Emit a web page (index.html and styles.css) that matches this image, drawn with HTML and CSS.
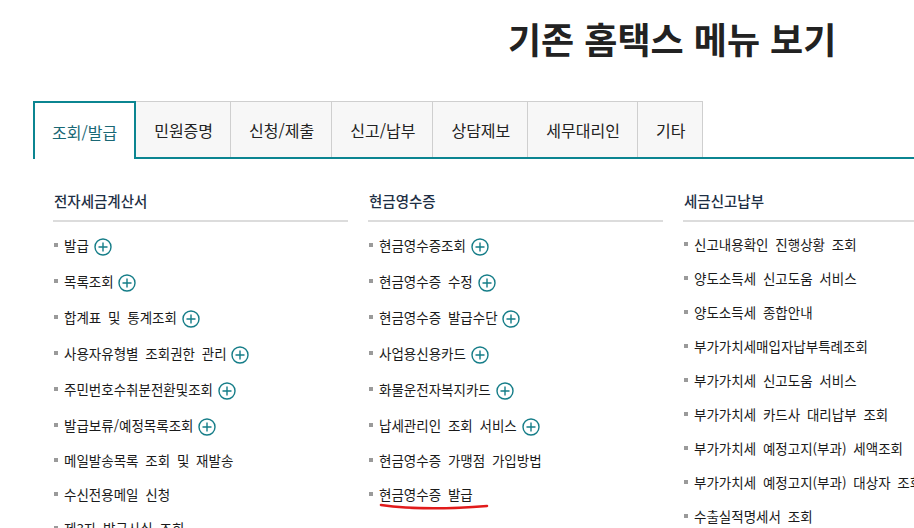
FILE: index.html
```html
<!DOCTYPE html>
<html lang="ko">

<head>
  <meta charset="UTF-8">
  <title>기존 홈택스 메뉴 보기</title>
  <link rel="stylesheet" href="styles.css">
</head>

<body>
  <div class="page">
    <!-- 제목 -->
    <h1 class="title">기존 홈택스 메뉴 보기</h1>

    <!-- 탭 -->
    <ul class="tabs">
      <li class="tab on">조회/발급</li>
      <li class="tab">민원증명</li>
      <li class="tab">신청/제출</li>
      <li class="tab">신고/납부</li>
      <li class="tab">상담제보</li>
      <li class="tab">세무대리인</li>
      <li class="tab">기타</li>
    </ul>

    <!-- 메뉴 목록 -->
    <div class="menu">
      <div class="col">
        <h2 class="col-title">전자세금계산서</h2>
        <ul class="items">
          <li class="item more">발급 <span class="plus"><svg viewBox="0 0 18 18"><circle cx="9" cy="9" r="8"/><path d="M9 4.5v9M4.5 9h9"/></svg></span></li>
          <li class="item more">목록조회 <span class="plus"><svg viewBox="0 0 18 18"><circle cx="9" cy="9" r="8"/><path d="M9 4.5v9M4.5 9h9"/></svg></span></li>
          <li class="item more">합계표 및 통계조회 <span class="plus"><svg viewBox="0 0 18 18"><circle cx="9" cy="9" r="8"/><path d="M9 4.5v9M4.5 9h9"/></svg></span></li>
          <li class="item more">사용자유형별 조회권한 관리 <span class="plus"><svg viewBox="0 0 18 18"><circle cx="9" cy="9" r="8"/><path d="M9 4.5v9M4.5 9h9"/></svg></span></li>
          <li class="item more">주민번호수취분전환및조회 <span class="plus"><svg viewBox="0 0 18 18"><circle cx="9" cy="9" r="8"/><path d="M9 4.5v9M4.5 9h9"/></svg></span></li>
          <li class="item more">발급보류/예정목록조회 <span class="plus"><svg viewBox="0 0 18 18"><circle cx="9" cy="9" r="8"/><path d="M9 4.5v9M4.5 9h9"/></svg></span></li>
          <li class="item">메일발송목록 조회 및 재발송</li>
          <li class="item">수신전용메일 신청</li>
          <li class="item">제3자 발급사실 조회</li>
        </ul>
      </div>

      <div class="col">
        <h2 class="col-title">현금영수증</h2>
        <ul class="items">
          <li class="item more">현금영수증조회 <span class="plus"><svg viewBox="0 0 18 18"><circle cx="9" cy="9" r="8"/><path d="M9 4.5v9M4.5 9h9"/></svg></span></li>
          <li class="item more">현금영수증 수정 <span class="plus"><svg viewBox="0 0 18 18"><circle cx="9" cy="9" r="8"/><path d="M9 4.5v9M4.5 9h9"/></svg></span></li>
          <li class="item more">현금영수증 발급수단 <span class="plus"><svg viewBox="0 0 18 18"><circle cx="9" cy="9" r="8"/><path d="M9 4.5v9M4.5 9h9"/></svg></span></li>
          <li class="item more">사업용신용카드 <span class="plus"><svg viewBox="0 0 18 18"><circle cx="9" cy="9" r="8"/><path d="M9 4.5v9M4.5 9h9"/></svg></span></li>
          <li class="item more">화물운전자복지카드 <span class="plus"><svg viewBox="0 0 18 18"><circle cx="9" cy="9" r="8"/><path d="M9 4.5v9M4.5 9h9"/></svg></span></li>
          <li class="item more">납세관리인 조회 서비스 <span class="plus"><svg viewBox="0 0 18 18"><circle cx="9" cy="9" r="8"/><path d="M9 4.5v9M4.5 9h9"/></svg></span></li>
          <li class="item">현금영수증 가맹점 가입방법</li>
          <li class="item marked">현금영수증 발급
            <!-- 빨간 밑줄 표시 -->
            <svg class="mark" viewBox="0 0 112 9"><path d="M2 3 C 30 7, 70 7, 108 4"/></svg>
          </li>
        </ul>
      </div>

      <div class="col">
        <h2 class="col-title">세금신고납부</h2>
        <ul class="items">
          <li class="item">신고내용확인 진행상황 조회</li>
          <li class="item">양도소득세 신고도움 서비스</li>
          <li class="item">양도소득세 종합안내</li>
          <li class="item">부가가치세매입자납부특례조회</li>
          <li class="item">부가가치세 신고도움 서비스</li>
          <li class="item">부가가치세 카드사 대리납부 조회</li>
          <li class="item">부가가치세 예정고지(부과) 세액조회</li>
          <li class="item">부가가치세 예정고지(부과) 대상자 조회</li>
          <li class="item">수출실적명세서 조회</li>
        </ul>
      </div>
    </div>
  </div>
</body>

</html>
```

FILE: styles.css
```css
* {
  margin: 0;
  padding: 0;
  box-sizing: border-box;
}

html,
body {
  overflow: hidden;
}

body {
  background: #fff;
  color: #222;
  font-family: "Noto Sans CJK KR", "Noto Sans", sans-serif;
}

ul {
  list-style: none;
}

.page {
  padding-left: 33px;
  width: 1000px;
}

.title {
  margin-top: 13px;
  padding-left: 475px;
  height: 50px;
  line-height: 50px;
  font-size: 36px;
  font-weight: 700;
  color: #222;
}

/* 탭 */
.tabs {
  display: flex;
  margin-top: 38px;
  height: 58px;
  border-bottom: 2px solid #0b8591;
}

.tab {
  display: flex;
  align-items: center;
  height: 56px;
  padding: 0 17px 0 18px;
  border-top: 1px solid #cfcfcf;
  border-right: 1px solid #cfcfcf;
  background: #f7f7f7;
  font-size: 16px;
  color: #222;
  white-space: nowrap;
}

.tab.on {
  height: 58px;
  padding: 2px 17px 0;
  border: 2px solid #0b8591;
  border-bottom: 0;
  background: #fff;
  color: #1a6875;
}

/* 메뉴 */
.menu {
  display: grid;
  grid-template-columns: repeat(3, 295px);
  gap: 20px;
  padding-left: 20px;
  margin-top: 32px;
}

.col-title {
  height: 31px;
  padding-left: 1px;
  line-height: 20px;
  border-bottom: 2px solid #dcdcdc;
  font-size: 14.5px;
  font-weight: 500;
  color: #1e2f45;
}

.items {
  padding-top: 5px;
}

.item {
  position: relative;
  height: 34px;
  line-height: 34px;
  padding-left: 11px;
  font-size: 13.5px;
  word-spacing: 3px;
  color: #1a1a1a;
  white-space: nowrap;
}

.item::before {
  content: "";
  position: absolute;
  left: 1px;
  top: 15px;
  width: 4px;
  height: 4px;
  background: #9a9a9a;
}

.item.more {
  height: 36px;
  line-height: 36px;
}

.item.more::before {
  top: 16px;
}

.plus {
  display: inline-block;
  width: 18px;
  height: 18px;
  margin-left: -2px;
  vertical-align: middle;
}

.plus svg {
  display: block;
  width: 18px;
  height: 18px;
  fill: none;
  stroke: #157d88;
  stroke-width: 1.4;
}

.mark {
  position: absolute;
  left: 11px;
  top: 25px;
  width: 112px;
  height: 9px;
  fill: none;
  stroke: #e11b1b;
  stroke-width: 2.6;
  stroke-linecap: round;
}
```
